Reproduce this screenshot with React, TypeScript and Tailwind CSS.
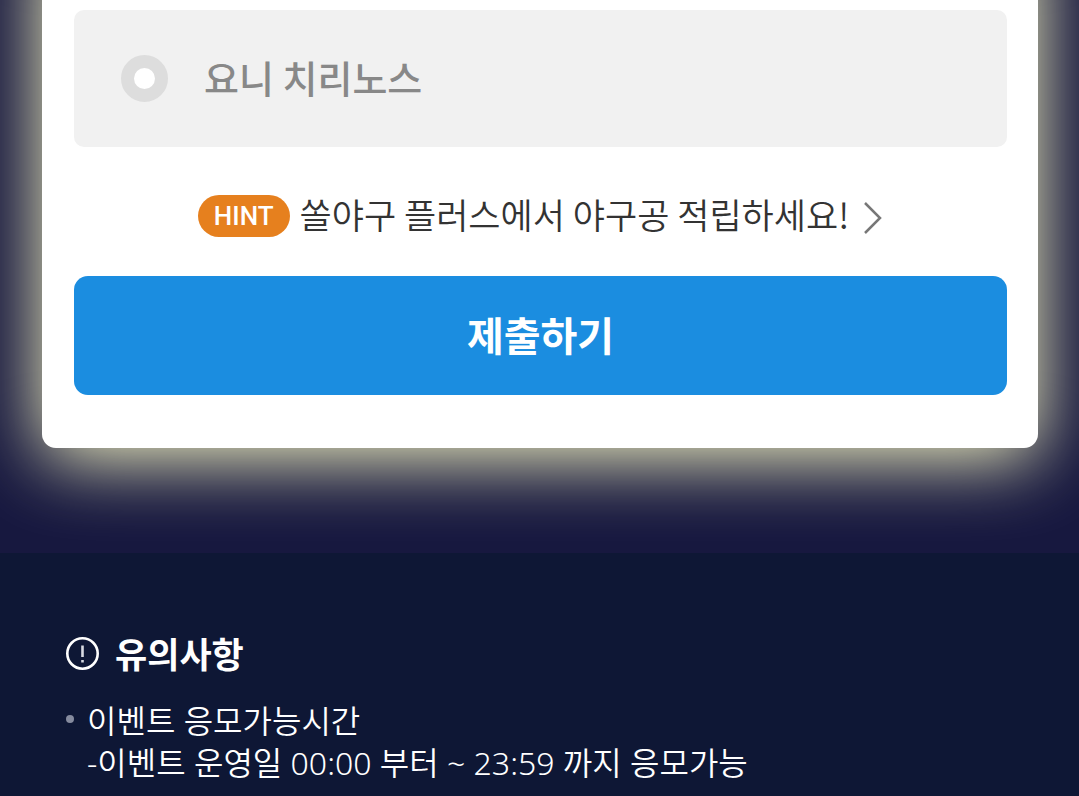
export default function App() {
  return (
    <div className="min-h-screen overflow-hidden bg-[#0e1735] font-['Noto_Sans_CJK_KR',sans-serif] text-white">
      <main className="-mt-20 bg-[#17183f] pr-[41px] pb-[105px] pl-[42px]">
        <form onSubmit={(e) => e.preventDefault()} className="rounded-b-[14px] bg-white pt-[90px] pr-[31px] pb-[53px] pl-8 shadow-[0_10px_76px_#ffffc8]">
          <label className="flex h-[137px] items-center gap-9 rounded-[10px] bg-[#f1f1f1] pb-1 pl-[47px] text-[38px] font-medium text-[#888]">
            <input type="radio" name="answer" className="mt-1 size-[47px] shrink-0 appearance-none rounded-full border-[13px] border-[#ddd] bg-white" />
            <span>요니 치리노스</span>
          </label>
          <a href="#hint" className="mt-[42px] flex h-[54px] items-center justify-center text-[35px] text-[#333]">
            <span className="mr-[10px] flex h-[42px] items-center rounded-full bg-[#e6801e] px-4 font-['Roboto',sans-serif] text-[26px] font-medium text-white">HINT</span>
            <span className="pb-1 font-[350]">쏠야구 플러스에서 야구공 적립하세요!</span>
            <svg className="mt-1 ml-[14px]" width="20" height="34" viewBox="0 0 20 34" fill="none" stroke="#777" strokeWidth="2.5"><path d="M2 2l15 15L2 32" /></svg>
          </a>
          <button type="submit" className="mt-[33px] h-[119px] w-full rounded-[14px] bg-[#1b8de0] pb-1 text-[40px] font-bold text-white">제출하기</button>
        </form>
      </main>
      <footer className="px-[66px] pt-[75px]">
        <h2 className="flex items-center gap-4 text-[35px] leading-[50px] font-bold">
          <svg width="33" height="33" viewBox="0 0 33 33" fill="none" stroke="#fff"><circle cx="16.5" cy="16.5" r="15.2" strokeWidth="2.6" /><path d="M16.5 8.5v11.5M16.5 23v2.5" stroke="#d8dae2" strokeWidth="2.6" /></svg>
          유의사항
        </h2>
        <ul className="mt-[22px] font-['Noto_Sans','Noto_Sans_CJK_KR',sans-serif] text-[32px] leading-[42px] font-[350]">
          <li className="flex gap-[13px]"><span className="mt-[15px] size-2 shrink-0 rounded-full bg-[#858b9e]" /><p>이벤트 응모가능시간<br />-이벤트 운영일 00:00 부터 ~ 23:59 까지 응모가능</p></li>
        </ul>
      </footer>
    </div>
  );
}
